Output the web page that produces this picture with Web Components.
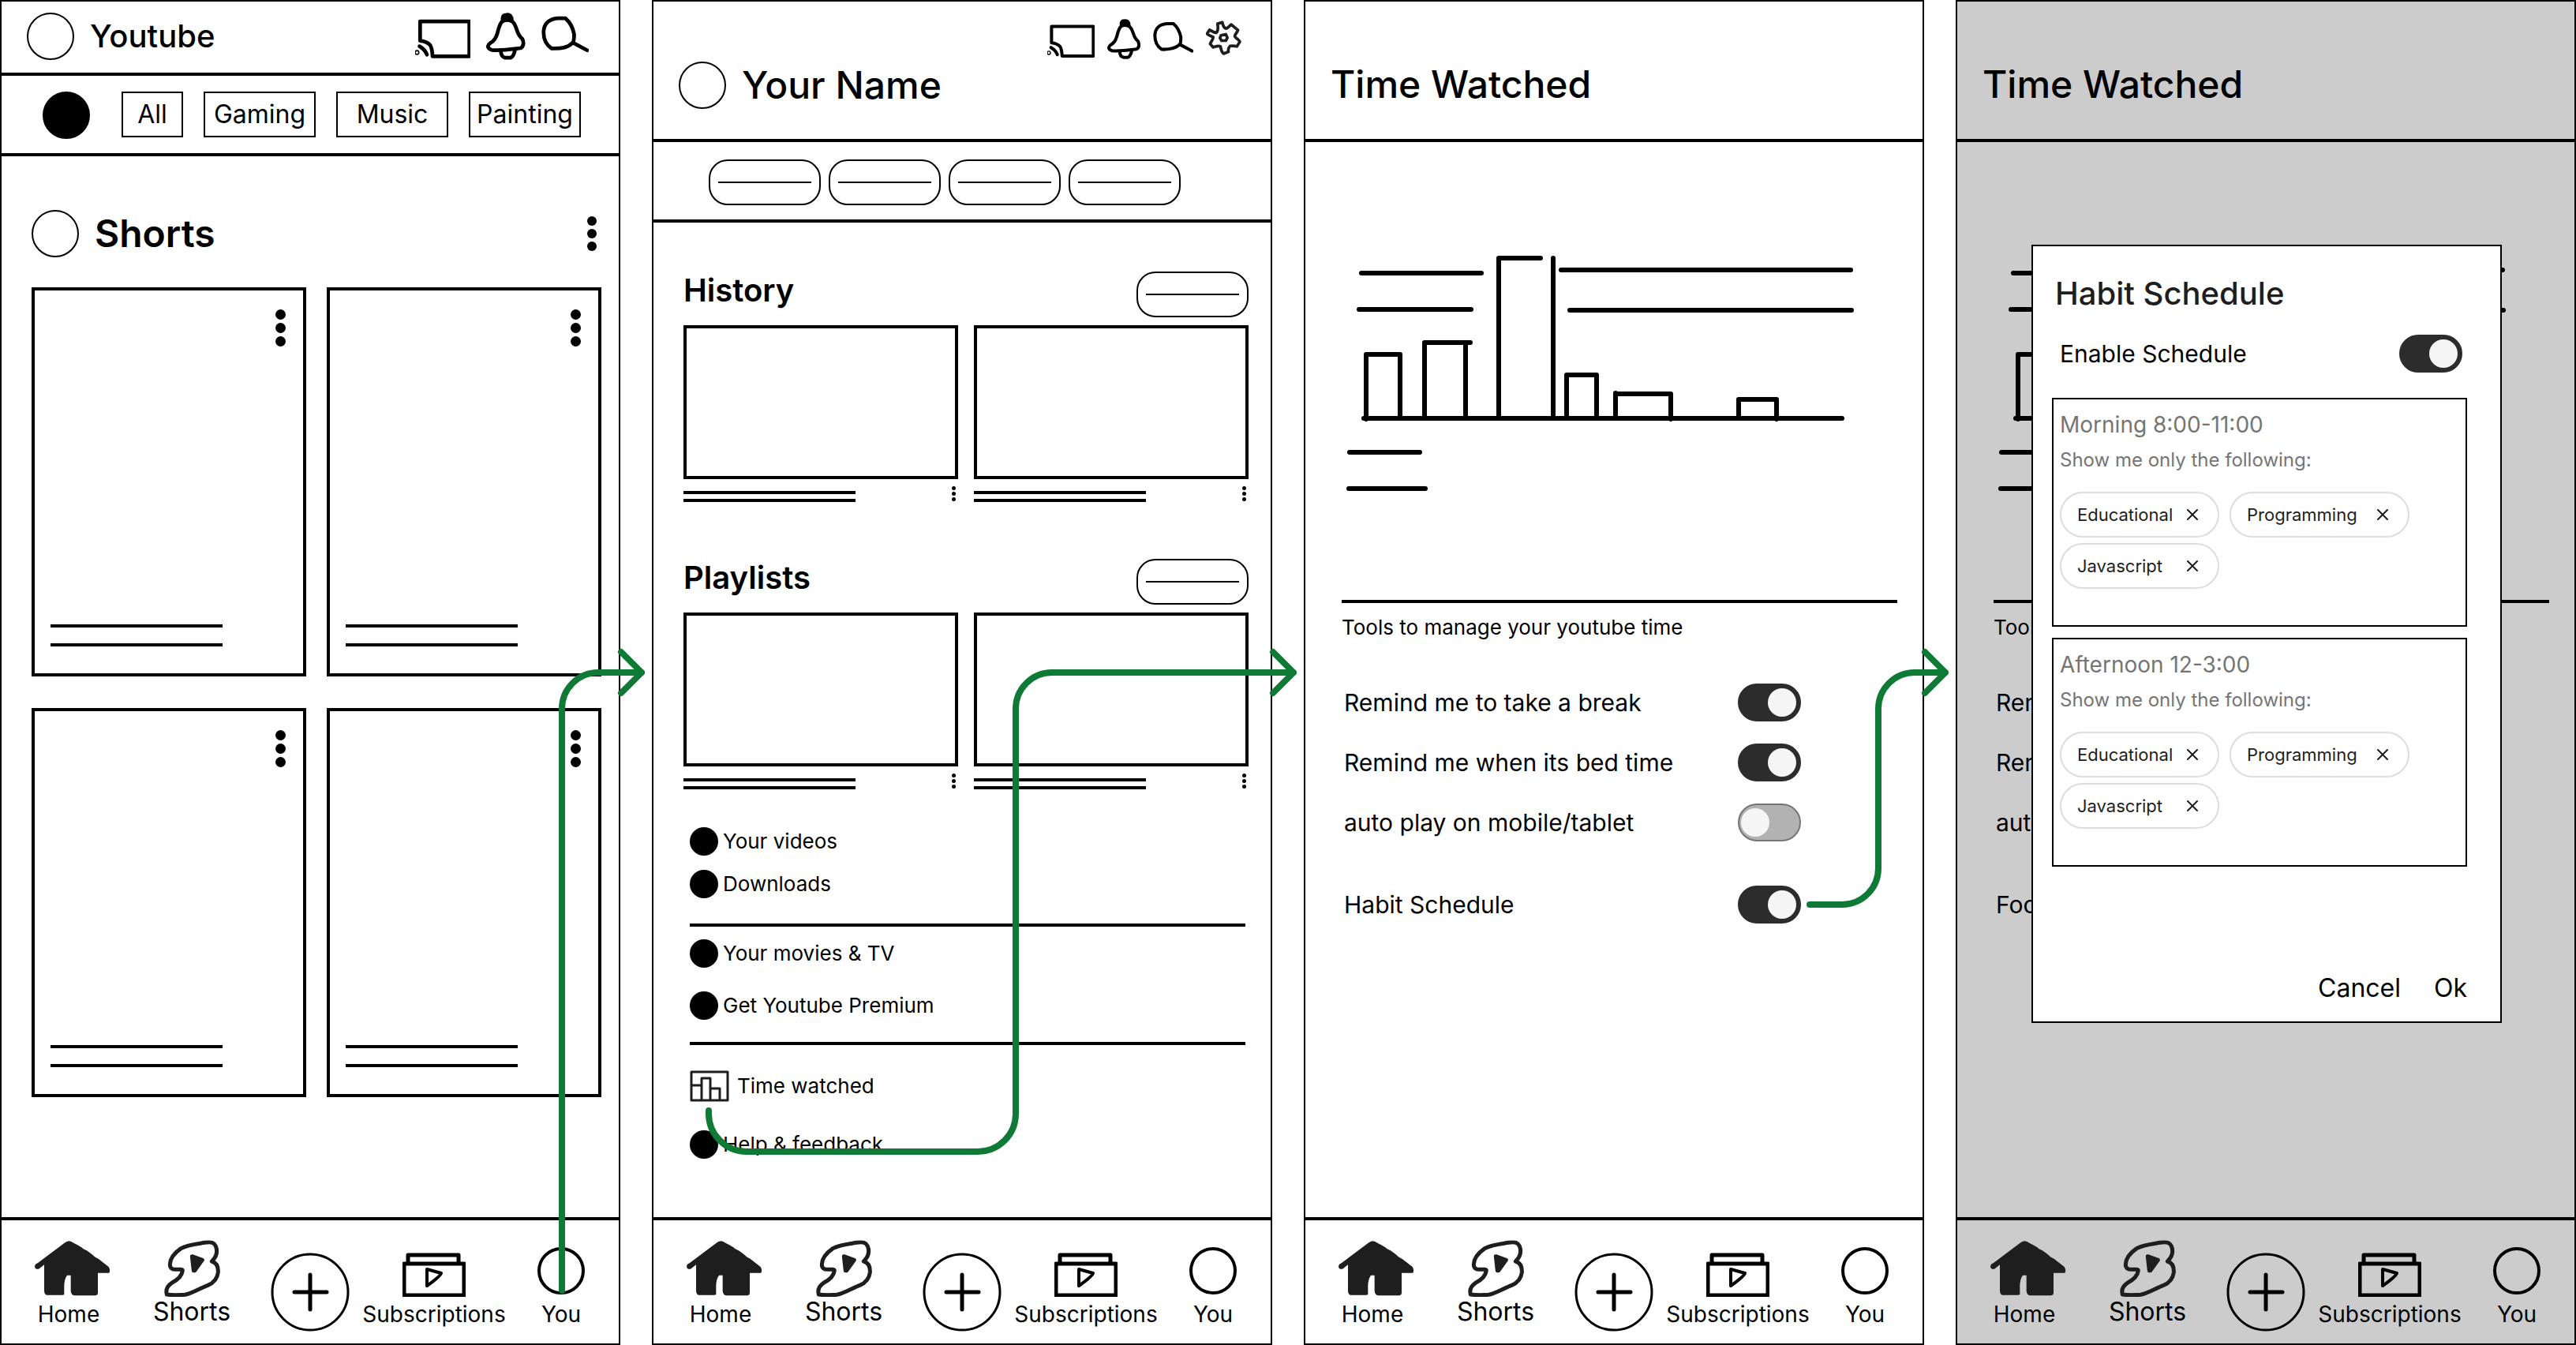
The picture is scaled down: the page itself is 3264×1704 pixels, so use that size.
<!DOCTYPE html>
<html lang="en">
<head>
<meta charset="utf-8">
<title>Youtube habit schedule flow</title>
<style>
	body {
		margin: 0;
		background: #ffffff;
		color: #000000;
		font-family: Inter, "Liberation Sans", sans-serif;
	}
</style>
</head>
<body>
<flow-board>
	<home-screen></home-screen>
	<profile-screen></profile-screen>
	<time-screen last="Habit Schedule"></time-screen>
	<time-screen last="Focus Schedule" dim>
		<habit-dialog></habit-dialog>
	</time-screen>
</flow-board>

<script>
// hand drawn icons: [viewBox, markup], all of a group share one height
const ICONS = {
	cast: ['18 26 178 152', `<path d="M34 116V54H192V166H74C73 150 72 138 66 130C58 121 47 117 34 116"/>
		<path d="M32 134C44 141 52 150 56 161"/><circle cx="24" cy="154" r="2"/>`],
	bell: ['250 26 126 152', `<path d="M300 56C292 66 290 78 286 92C282 107 276 117 263 124C252 132 254 141 268 146C300 149 335 143 360 140C372 135 371 120 366 110C352 100 350 84 345 72C340 57 333 50 318 50C309 50 304 52 300 56Z"/>
		<path d="M303 52V43Q304 33 315 33Q333 31 332 52M313 43H324"/>
		<path d="M297 150Q298 168 311 171H328Q338 167 342 148"/>`],
	search: ['429 26 153 152', `<path d="M436 90C436 60 455 46 482 44H506C520 56 530 74 534 95C534 105 534 117 530 122C515 138 495 142 462 141C445 130 436 115 436 90Z"/>
		<path d="M533 124L576 147"/>`],
	gear: ['627 26 136 152', `<g stroke="#1e1e1e" stroke-width="11"><path d="M671 44L689 39C691 50 694 59 702 62C712 60 716 52 722 47L748 68C744 79 736 84 736 92C741 100 752 104 755 112L744 130C736 127 728 127 718 128C712 134 711 144 712 150L694 157C686 152 684 142 682 130C674 126 664 130 654 133L643 120C648 108 656 102 654 94C648 90 638 90 631 82L641 67C650 72 658 78 666 78C676 70 672 56 671 44Z"/>
		<path d="M684 88L702 84L708 97L702 108L686 108L680 98Z"/></g>`],
	home: ['-3 34 318 216', `<path fill="#1e1e1e" stroke="none" d="M27 135Q28 125 38 122L140 45Q157 30 175 45C195 56 205 60 212 68C232 77 245 88 255 98C270 106 275 110 285 118L308 136Q316 148 310 159H267V236Q266 245 256 245H180Q166 245 164 228V168H150Q138 185 139 215V240Q138 243 130 243H72Q63 240 63 225V128L42 144Q28 146 27 135Z"/>`],
	shorts: ['510 32 224 216', `<g stroke="#1e1e1e" stroke-width="15"><path d="M526 239C521 220 527 207 545 195C570 182 584 165 586 148C586 143 575 143 565 144C545 145 538 138 538 125C538 100 560 78 580 64C605 50 640 47 670 42C698 38 705 42 712 55C720 75 716 95 697 113C715 118 722 135 721 155C718 180 702 196 682 204C655 214 622 235 595 240C570 242 545 242 526 239Z"/>
		<path fill="#1e1e1e" d="M622 94L661 108L632 148H628Z"/></g>`],
	subs: ['0 0 80 72', `<g stroke-width="4"><path d="M2 30H78V70H2ZM7 30V19H71V30" stroke-width="5"/><path d="M31 37L49 42Q48 46 31 58Z"/></g>`],
	you: ['0 0 60 72', `<circle cx="30" cy="39" r="28" stroke-width="4"/>`],
	plus: ['0 0 100 100', `<circle cx="50" cy="50" r="48" stroke-width="3"/><path d="M30 50H71M50 28V72" stroke-width="5"/>`],
	stats: ['0 0 50 40', `<g stroke="#1e1e1e" stroke-width="3"><path d="M2 2H48V38H2ZM2 19H14M15 36V10H26V36M27 23H38V36"/></g>`],
	close: ['0 0 14 14', `<path d="M1 1L13 13M13 1L1 13" stroke="#1e1e1e" stroke-width="2"/>`]
};

class SketchIcon extends HTMLElement {
	constructor() {
		super();
		this.attachShadow({ mode: 'open' });
	}

	connectedCallback() {
		const [box, markup] = ICONS[this.getAttribute('name')];
		this.shadowRoot.innerHTML = `
		<style>
			:host {
				display: block;
				height: 72px;
			}
			svg {
				display: block;
				height: 100%;
				width: auto;
			}
		</style>
		<svg viewBox="${box}" fill="none" stroke="#000000" stroke-width="12" stroke-linecap="round" stroke-linejoin="round" aria-hidden="true">${markup}</svg>
		`;
	}
}
customElements.define('sketch-icon', SketchIcon);

// three vertical dots, sized with --dot and --dot-gap
class MoreDots extends HTMLElement {
	constructor() {
		super();
		this.attachShadow({ mode: 'open' });
		this.shadowRoot.innerHTML = `
		<style>
			:host {
				display: block;
			}
			button {
				display: flex;
				flex-direction: column;
				gap: var(--dot-gap, 4px);
				padding: 0;
				border: 0;
				background: none;
			}
			i {
				width: var(--dot, 12px);
				height: var(--dot, 12px);
				border-radius: 50%;
				background: #000000;
			}
		</style>
		<button type="button" aria-label="More"><i></i><i></i><i></i></button>
		`;
	}
}
customElements.define('more-dots', MoreDots);

class LinePill extends HTMLElement {
	constructor() {
		super();
		this.attachShadow({ mode: 'open' });
		this.shadowRoot.innerHTML = `
		<style>
			:host {
				display: block;
			}
			button {
				display: flex;
				align-items: center;
				box-sizing: border-box;
				width: 142px;
				height: 58px;
				padding: 0 10px;
				border: 2px solid #000000;
				border-radius: 24px;
				background: none;
			}
			span {
				flex: 1;
				height: 2px;
				background: #000000;
			}
		</style>
		<button type="button" aria-label="Placeholder"><span></span></button>
		`;
	}
}
customElements.define('line-pill', LinePill);

class BottomNav extends HTMLElement {
	constructor() {
		super();
		this.attachShadow({ mode: 'open' });
		this.shadowRoot.innerHTML = `
		<style>
			:host {
				display: block;
				border-top: 4px solid #000000;
			}
			nav {
				display: grid;
				grid-template-columns: minmax(0, 152fr) minmax(0, 160fr) minmax(0, 139fr) minmax(0, 176fr) minmax(0, 146fr);
				height: 156px;
				padding-left: 9px;
			}
			a {
				display: flex;
				flex-direction: column;
				align-items: center;
				gap: 5px;
				padding-top: 25px;
				color: inherit;
				text-decoration: none;
				font-size: 28px;
				line-height: 34px;
			}
			.big {
				font-size: 32px;
				line-height: 28px;
			}
			button {
				justify-self: center;
				align-self: start;
				margin: 0;
				padding: 41px 0 0;
				border: 0;
				background: none;
			}
			button sketch-icon {
				height: 100px;
			}
		</style>
		<nav>
			<a href="#home"><sketch-icon name="home"></sketch-icon>Home</a>
			<a href="#shorts" class="big"><sketch-icon name="shorts"></sketch-icon>Shorts</a>
			<button type="button" aria-label="Create"><sketch-icon name="plus"></sketch-icon></button>
			<a href="#subscriptions"><sketch-icon name="subs"></sketch-icon>Subscriptions</a>
			<a href="#you"><sketch-icon name="you"></sketch-icon>You</a>
		</nav>
		`;
	}
}
customElements.define('bottom-nav', BottomNav);

// outline shared by every phone screen
class PhoneFrame extends HTMLElement {
	constructor() {
		super();
		this.attachShadow({ mode: 'open' });
		this.shadowRoot.innerHTML = `
		<style>
			:host {
				display: flex;
				flex-direction: column;
				position: relative;
				box-sizing: border-box;
				min-height: 100vh;
				border: 2px solid #000000;
				background: #ffffff;
			}
			:host([dim]) {
				background: #cccccc;
			}
			main {
				flex: 1;
			}
		</style>
		<slot name="top"></slot>
		<main><slot></slot></main>
		<bottom-nav></bottom-nav>
		<slot name="overlay"></slot>
		`;
	}
}
customElements.define('phone-frame', PhoneFrame);

class ShortCard extends HTMLElement {
	constructor() {
		super();
		this.attachShadow({ mode: 'open' });
		this.shadowRoot.innerHTML = `
		<style>
			:host {
				display: flex;
				flex-direction: column;
				justify-content: space-between;
				box-sizing: border-box;
				height: 493px;
				padding: 24px 22px 34px 20px;
				border: 4px solid #000000;
			}
			more-dots {
				align-self: flex-end;
				--dot: 13px;
			}
			.lines {
				display: flex;
				flex-direction: column;
				gap: 20px;
			}
			.lines div {
				width: 218px;
				height: 4px;
				background: #000000;
			}
		</style>
		<more-dots></more-dots>
		<div class="lines"><div></div><div></div></div>
		`;
	}
}
customElements.define('short-card', ShortCard);

class HomeScreen extends HTMLElement {
	constructor() {
		super();
		this.attachShadow({ mode: 'open' });
		this.shadowRoot.innerHTML = `
		<style>
			:host {
				display: block;
			}
			header, .chips, .title {
				display: flex;
			}
			header {
				align-items: center;
				gap: 20px;
				padding: 14px 38px 16px 32px;
				border-bottom: 4px solid #000000;
			}
			.avatar {
				box-sizing: border-box;
				width: 60px;
				height: 60px;
				border: 2px solid #000000;
				border-radius: 50%;
			}
			h1, h2 {
				flex: 1;
				margin: 0;
			}
			h1 {
				font-size: 40px;
				font-weight: 500;
				line-height: 48px;
			}
			h2 {
				font-size: 48px;
				font-weight: 600;
				line-height: 60px;
			}
			header sketch-icon {
				height: 60px;
			}
			.chips {
				gap: 26px;
				padding: 20px 48px 18px 52px;
				border-bottom: 4px solid #000000;
			}
			.chips .avatar {
				margin-right: 14px;
				background: #000000;
			}
			.chips button {
				box-sizing: border-box;
				width: 142px;
				height: 58px;
				padding: 0;
				border: 2px solid #000000;
				background: none;
				color: inherit;
				font: 400 32px/38px Inter, "Liberation Sans", sans-serif;
			}
			.chips .all {
				width: 78px;
			}
			.body {
				padding: 68px 22px 40px 38px;
			}
			.title {
				align-items: center;
				gap: 20px;
				padding-right: 6px;
				margin-bottom: 38px;
			}
			.grid {
				display: grid;
				grid-template-columns: 1fr 1fr;
				gap: 40px 26px;
			}
		</style>
		<phone-frame>
			<header slot="top">
				<div class="avatar"></div>
				<h1>Youtube</h1>
				<sketch-icon name="cast"></sketch-icon>
				<sketch-icon name="bell"></sketch-icon>
				<sketch-icon name="search"></sketch-icon>
			</header>
			<div class="chips" slot="top">
				<div class="avatar"></div>
				<button type="button" class="all">All</button>
				<button type="button">Gaming</button>
				<button type="button">Music</button>
				<button type="button">Painting</button>
			</div>
			<div class="body">
				<div class="title">
					<div class="avatar"></div>
					<h2>Shorts</h2>
					<more-dots></more-dots>
				</div>
				<div class="grid">
					<short-card></short-card>
					<short-card></short-card>
					<short-card></short-card>
					<short-card></short-card>
				</div>
			</div>
		</phone-frame>
		`;
	}
}
customElements.define('home-screen', HomeScreen);

class VideoCard extends HTMLElement {
	constructor() {
		super();
		this.attachShadow({ mode: 'open' });
		this.shadowRoot.innerHTML = `
		<style>
			:host {
				display: block;
			}
			.thumb {
				box-sizing: border-box;
				height: 195px;
				border: 4px solid #000000;
			}
			.meta {
				display: flex;
				justify-content: space-between;
				padding: 9px 3px 0 0;
			}
			.lines {
				display: flex;
				flex-direction: column;
				gap: 6px;
				padding-top: 6px;
			}
			.lines div {
				width: 218px;
				height: 4px;
				background: #000000;
			}
			more-dots {
				--dot: 5px;
				--dot-gap: 2px;
			}
		</style>
		<div class="thumb"></div>
		<div class="meta">
			<div class="lines"><div></div><div></div></div>
			<more-dots></more-dots>
		</div>
		`;
	}
}
customElements.define('video-card', VideoCard);

class VideoShelf extends HTMLElement {
	constructor() {
		super();
		this.attachShadow({ mode: 'open' });
		this.shadowRoot.innerHTML = `
		<style>
			:host {
				display: block;
			}
			.head {
				display: flex;
				justify-content: space-between;
				margin-bottom: 10px;
			}
			h2 {
				margin: 0;
				font-size: 40px;
				font-weight: 600;
				line-height: 48px;
			}
			.grid {
				display: grid;
				grid-template-columns: 1fr 1fr;
				gap: 20px;
			}
		</style>
		<div class="head"><h2><slot></slot></h2><line-pill></line-pill></div>
		<div class="grid"><video-card></video-card><video-card></video-card></div>
		`;
	}
}
customElements.define('video-shelf', VideoShelf);

class ProfileScreen extends HTMLElement {
	constructor() {
		super();
		this.attachShadow({ mode: 'open' });
		this.shadowRoot.innerHTML = `
		<style>
			:host {
				display: block;
			}
			header {
				padding: 22px 36px 38px 32px;
				border-bottom: 4px solid #000000;
			}
			.icons, .who, .pills {
				display: flex;
			}
			.icons {
				justify-content: flex-end;
				gap: 16px;
				margin-bottom: 3px;
			}
			.icons sketch-icon {
				height: 51px;
			}
			.who {
				align-items: center;
				gap: 20px;
			}
			.avatar {
				box-sizing: border-box;
				width: 60px;
				height: 60px;
				border: 2px solid #000000;
				border-radius: 50%;
			}
			h1 {
				margin: 0;
				font-size: 48px;
				font-weight: 500;
				line-height: 60px;
			}
			.pills {
				gap: 10px;
				padding: 22px 70px 18px;
				border-bottom: 4px solid #000000;
			}
			.shelves {
				display: flex;
				flex-direction: column;
				gap: 72px;
				padding: 62px 28px 48px 38px;
			}
			.links {
				padding: 0 32px 40px 46px;
			}
			ul {
				display: flex;
				flex-direction: column;
				gap: 18px;
				margin: 0;
				padding: 0;
				list-style: none;
			}
			.wide {
				gap: 30px;
			}
			.last {
				gap: 36px;
			}
			hr {
				height: 4px;
				margin: 32px 0 16px;
				border: 0;
				background: #000000;
			}
			.low {
				margin: 28px 0 32px;
			}
			a {
				display: flex;
				align-items: center;
				gap: 6px;
				color: inherit;
				text-decoration: none;
				font-size: 26px;
				line-height: 36px;
			}
			a i {
				width: 36px;
				height: 36px;
				border-radius: 50%;
				background: #000000;
			}
			.stats {
				gap: 10px;
			}
			a sketch-icon {
				height: 40px;
			}
		</style>
		<phone-frame>
			<header slot="top">
				<div class="icons">
					<sketch-icon name="cast"></sketch-icon>
					<sketch-icon name="bell"></sketch-icon>
					<sketch-icon name="search"></sketch-icon>
					<sketch-icon name="gear"></sketch-icon>
				</div>
				<div class="who"><div class="avatar"></div><h1>Your Name</h1></div>
			</header>
			<div class="pills" slot="top">
				<line-pill></line-pill><line-pill></line-pill><line-pill></line-pill><line-pill></line-pill>
			</div>
			<div class="shelves">
				<video-shelf>History</video-shelf>
				<video-shelf>Playlists</video-shelf>
			</div>
			<div class="links">
				<ul>
					<li><a href="#videos"><i></i>Your videos</a></li>
					<li><a href="#downloads"><i></i>Downloads</a></li>
				</ul>
				<hr>
				<ul class="wide">
					<li><a href="#movies"><i></i>Your movies &amp; TV</a></li>
					<li><a href="#premium"><i></i>Get Youtube Premium</a></li>
				</ul>
				<hr class="low">
				<ul class="last">
					<li><a href="#time" class="stats"><sketch-icon name="stats"></sketch-icon>Time watched</a></li>
					<li><a href="#help"><i></i>Help &amp; feedback</a></li>
				</ul>
			</div>
		</phone-frame>
		`;
	}
}
customElements.define('profile-screen', ProfileScreen);

class ToggleRow extends HTMLElement {
	constructor() {
		super();
		this.attachShadow({ mode: 'open' });
		this.shadowRoot.innerHTML = `
		<style>
			:host {
				display: block;
			}
			label {
				display: flex;
				align-items: center;
				justify-content: space-between;
				font-size: 30px;
				line-height: 36px;
			}
			input {
				appearance: none;
				display: flex;
				align-items: center;
				box-sizing: border-box;
				width: 80px;
				height: 48px;
				margin: 0;
				padding: 0 2px;
				border: 2px solid #757575;
				border-radius: 24px;
				background: #b2b2b2;
			}
			input::before {
				content: "";
				width: 36px;
				height: 36px;
				border-radius: 50%;
				background: #f5f5f5;
			}
			input:checked {
				justify-content: flex-end;
				padding: 0 4px;
				border-color: #2c2c2c;
				background: #2c2c2c;
			}
		</style>
		<label><span><slot></slot></span><input type="checkbox" role="switch"></label>
		`;
	}

	connectedCallback() {
		this.shadowRoot.querySelector('input').checked = this.hasAttribute('on');
	}
}
customElements.define('toggle-row', ToggleRow);

class UsageChart extends HTMLElement {
	constructor() {
		super();
		this.attachShadow({ mode: 'open' });
		this.shadowRoot.innerHTML = `
		<style>
			:host {
				display: block;
			}
			svg {
				display: block;
				width: 100%;
				height: auto;
			}
		</style>
		<svg viewBox="0 0 704 310" fill="none" stroke="#000000" stroke-width="6" stroke-linecap="round" stroke-linejoin="round" role="img" aria-label="Time watched per day">
			<path d="M25 26H177M22 72H164M278 22H645M289 73H646"/>
			<path d="M31 211V129H74V210"/>
			<path d="M105 210V114H163M157 114V210"/>
			<path d="M199 210V7H252M268 7V206"/>
			<path d="M285 210V155H323V210"/>
			<path d="M347 210V178M347 179H417V211"/>
			<path d="M503 210V186H551V211"/>
			<path d="M28 210H634M10 253H99M9 299H106"/>
		</svg>
		`;
	}
}
customElements.define('usage-chart', UsageChart);

class TimeScreen extends HTMLElement {
	constructor() {
		super();
		this.attachShadow({ mode: 'open' });
	}

	connectedCallback() {
		this.shadowRoot.innerHTML = `
		<style>
			:host {
				display: block;
			}
			header {
				padding: 75px 32px 39px;
				border-bottom: 4px solid #000000;
			}
			h1 {
				margin: 0;
				font-size: 48px;
				font-weight: 500;
				line-height: 60px;
			}
			.body {
				padding: 140px 32px 40px 46px;
			}
			hr {
				height: 4px;
				margin: 130px 0 16px;
				border: 0;
				background: #000000;
			}
			p {
				margin: 0 0 56px;
				font-size: 26px;
				line-height: 30px;
			}
			.rows {
				display: flex;
				flex-direction: column;
				gap: 28px;
				padding: 0 122px 0 3px;
			}
			.apart {
				padding-top: 28px;
			}
		</style>
		<phone-frame ${this.hasAttribute('dim') ? 'dim' : ''}>
			<header slot="top"><h1>Time Watched</h1></header>
			<div class="body">
				<usage-chart></usage-chart>
				<hr>
				<p>Tools to manage your youtube time</p>
				<div class="rows">
					<toggle-row on>Remind me to take a break</toggle-row>
					<toggle-row on>Remind me when its bed time</toggle-row>
					<toggle-row>auto play on mobile/tablet</toggle-row>
					<toggle-row on class="apart">${this.getAttribute('last')}</toggle-row>
				</div>
			</div>
			<slot slot="overlay"></slot>
		</phone-frame>
		`;
	}
}
customElements.define('time-screen', TimeScreen);

class TagChip extends HTMLElement {
	constructor() {
		super();
		this.attachShadow({ mode: 'open' });
		this.shadowRoot.innerHTML = `
		<style>
			:host {
				display: flex;
				align-items: center;
				justify-content: space-between;
				box-sizing: border-box;
				width: 202px;
				height: 58px;
				padding: 0 25px 0 20px;
				border: 2px solid #dddddd;
				border-radius: 29px;
				color: #1e1e1e;
				font-size: 22px;
				line-height: 28px;
			}
			:host([wide]) {
				width: 228px;
			}
			button {
				padding: 0;
				border: 0;
				background: none;
			}
			sketch-icon {
				height: 14px;
			}
		</style>
		<span><slot></slot></span>
		<button type="button" aria-label="Remove"><sketch-icon name="close"></sketch-icon></button>
		`;
	}
}
customElements.define('tag-chip', TagChip);

class ScheduleBox extends HTMLElement {
	constructor() {
		super();
		this.attachShadow({ mode: 'open' });
		this.shadowRoot.innerHTML = `
		<style>
			:host {
				display: block;
				box-sizing: border-box;
				padding: 14px 8px 46px;
				border: 2px solid #000000;
				color: #757575;
			}
			h3, p {
				margin: 0;
				font-weight: 400;
			}
			h3 {
				margin-bottom: 12px;
				font-size: 28px;
				line-height: 36px;
			}
			p {
				margin-bottom: 25px;
				font-size: 24px;
				line-height: 30px;
			}
			.tags {
				display: flex;
				flex-wrap: wrap;
				gap: 7px 13px;
			}
		</style>
		<h3><slot></slot></h3>
		<p>Show me only the following:</p>
		<div class="tags">
			<tag-chip>Educational</tag-chip>
			<tag-chip wide>Programming</tag-chip>
			<tag-chip>Javascript</tag-chip>
		</div>
		`;
	}
}
customElements.define('schedule-box', ScheduleBox);

class HabitDialog extends HTMLElement {
	constructor() {
		super();
		this.attachShadow({ mode: 'open' });
		this.shadowRoot.innerHTML = `
		<style>
			:host {
				display: block;
				position: absolute;
				top: 308px;
				left: 94px;
				right: 92px;
				box-sizing: border-box;
				padding: 36px 42px 18px 24px;
				border: 2px solid #000000;
				background: #ffffff;
			}
			h2 {
				margin: 0 0 28px;
				padding-left: 4px;
				color: #1e1e1e;
				font-size: 40px;
				font-weight: 500;
				line-height: 48px;
			}
			toggle-row {
				margin-bottom: 32px;
				padding: 0 6px 0 10px;
			}
			schedule-box + schedule-box {
				margin-top: 14px;
			}
			footer {
				display: flex;
				justify-content: flex-end;
				gap: 42px;
				margin-top: 130px;
			}
			footer button {
				padding: 0;
				border: 0;
				background: none;
				color: inherit;
				font: 400 32px/48px Inter, "Liberation Sans", sans-serif;
			}
		</style>
		<section role="dialog" aria-labelledby="name">
			<h2 id="name">Habit Schedule</h2>
			<toggle-row on>Enable Schedule</toggle-row>
			<schedule-box>Morning 8:00-11:00</schedule-box>
			<schedule-box>Afternoon 12-3:00</schedule-box>
			<footer>
				<button type="button">Cancel</button>
				<button type="button">Ok</button>
			</footer>
		</section>
		`;
	}
}
customElements.define('habit-dialog', HabitDialog);

// the screens side by side, with the arrows of the flow over them
class FlowBoard extends HTMLElement {
	constructor() {
		super();
		this.attachShadow({ mode: 'open' });
		this.shadowRoot.innerHTML = `
		<style>
			:host {
				display: flex;
				gap: 40px;
				position: relative;
			}
			::slotted(*) {
				flex: 1 1 0;
				min-width: 0;
			}
			svg {
				position: absolute;
				top: 0;
				left: 0;
				width: 100%;
				height: auto;
				pointer-events: none;
			}
		</style>
		<slot></slot>
		<svg viewBox="0 0 3264 1704" fill="none" stroke="#0f7a35" stroke-width="8" stroke-linecap="round" stroke-linejoin="round" aria-hidden="true">
			<path d="M712 1635V898A46 46 0 0 1 758 852H813M787 826L813 852L787 878"/>
			<path d="M898 1407V1411A48 48 0 0 0 946 1459H1239A48 48 0 0 0 1287 1411V898A46 46 0 0 1 1333 852H1639M1613 826L1639 852L1613 878"/>
			<path d="M2293 1146H2334A46 46 0 0 0 2380 1100V898A46 46 0 0 1 2426 852H2465M2439 826L2465 852L2439 878"/>
		</svg>
		`;
	}
}
customElements.define('flow-board', FlowBoard);
</script>
</body>
</html>
